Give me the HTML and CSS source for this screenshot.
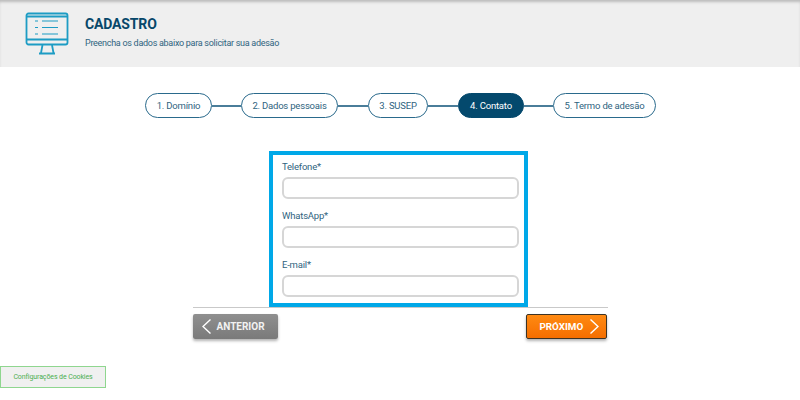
FILE: index.html
```html
<!DOCTYPE html>
<html lang="pt-BR">
<head>
<meta charset="utf-8">
<title>Cadastro</title>
<link rel="stylesheet" href="styles.css">
</head>
<body>
<header class="hero">
  <svg class="hero-icon" width="46" height="44" viewBox="0 0 46 44" fill="none" stroke="#1d9cc4" stroke-width="1.8">
    <rect x="1.5" y="1.5" width="41" height="31" rx="2"/>
    <path d="M1.5 4.5H42.5M1.5 27.5H42.5"/>
    <path d="M17.5 33L16 41M27 33L28.5 41M14 41.5H30"/>
    <path d="M10 9H13M17 9H33M10 15.5H13M17 15.5H33M10 22H13M17 22H33" stroke-width="1.2"/>
  </svg>
  <div class="hero-text">
    <h1 class="hero-title">CADASTRO</h1>
    <p class="hero-sub">Preencha os dados abaixo para solicitar sua adesão</p>
  </div>
</header>
<nav class="steps">
  <span class="step s1">1. Domínio</span><span class="link l1"></span>
  <span class="step s2">2. Dados pessoais</span><span class="link l2"></span>
  <span class="step s3">3. SUSEP</span><span class="link l3"></span>
  <span class="step s4 active">4. Contato</span><span class="link l4"></span>
  <span class="step s5">5. Termo de adesão</span>
</nav>
<main class="main">
  <form class="form-box">
    <label class="field"><span class="field-label">Telefone*</span><input class="field-input" type="text"></label>
    <label class="field"><span class="field-label">WhatsApp*</span><input class="field-input" type="text"></label>
    <label class="field"><span class="field-label">E-mail*</span><input class="field-input" type="text"></label>
  </form>
  <div class="actions">
    <button class="btn btn-prev" type="button">
      <svg width="9" height="15" viewBox="0 0 9 15" fill="none" stroke="#fff" stroke-width="1.4"><path d="M8.5 0.5L1 7.5L8.5 14.5"/></svg>
      ANTERIOR
    </button>
    <button class="btn btn-next" type="button">
      PRÓXIMO
      <svg width="9" height="15" viewBox="0 0 9 15" fill="none" stroke="#fff" stroke-width="1.4"><path d="M0.5 0.5L8 7.5L0.5 14.5"/></svg>
    </button>
  </div>
</main>
<button class="cookies" type="button">Configurações de Cookies</button>
</body>
</html>
```
FILE: styles.css
```css
* { box-sizing: border-box; }
html, body { margin: 0; padding: 0; }
body {
  width: 800px;
  height: 400px;
  overflow: hidden;
  background: #fff;
  font-family: Roboto, sans-serif;
  position: relative;
}
.hero {
  height: 67px;
  background: #efefef;
  display: flex;
  align-items: flex-start;
  padding: 12px 0 0 25px;
  box-shadow: inset 0 3px 3px -1px rgba(0,0,0,.22);
}
.hero-icon { flex: none; }
.hero-text { margin-left: 14px; padding-top: 3px; }
.hero-title {
  margin: 0;
  font-size: 14px;
  line-height: 18px;
  font-weight: 700;
  letter-spacing: -0.15px;
  color: #07476a;
}
.hero-sub {
  margin: 4px 0 0;
  font-size: 9px;
  line-height: 12px;
  letter-spacing: -0.28px;
  color: #2f6480;
}
.steps {
  display: flex;
  align-items: center;
  margin: 26px 0 0 145px;
  height: 25px;
}
.step {
  height: 25px;
  border: 1.5px solid #2a6a8c;
  border-radius: 13px;
  display: flex;
  align-items: center;
  justify-content: center;
  font-size: 9.5px;
  letter-spacing: -0.2px;
  color: #2f6480;
  background: #fff;
  flex: none;
}
.s1 { width: 67px; }
.s2 { width: 97px; }
.s3 { width: 60px; }
.s4 { width: 66px; }
.s5 { width: 103px; }
.step.active { background: #04496d; border-color: #04496d; color: #fff; }
.link { height: 2px; background: #4a7d99; flex: none; }
.l1 { width: 29px; }
.l2 { width: 30px; }
.l3 { width: 30px; }
.l4 { width: 29px; }
.main {
  display: flex;
  flex-direction: column;
  align-items: center;
  margin-top: 33px;
}
.form-box {
  width: 259px;
  height: 156px;
  margin-right: 3px;
  border: 4px solid #00a8e8;
  padding: 5px 9px 0;
  display: flex;
  flex-direction: column;
  gap: 7px;
}
.field { display: block; height: 42px; }
.field-label {
  display: block;
  font-size: 9.5px;
  letter-spacing: -0.2px;
  line-height: 14px;
  height: 17px;
  color: #2f6480;
}
.field-input {
  display: block;
  width: 237px;
  height: 22px;
  border: 2px solid #d6d6d6;
  border-radius: 6px;
  background: #fff;
  padding: 0;
  outline: none;
}
.actions {
  width: 415px;
  border-top: 1px solid #c9c9c9;
  padding-top: 6px;
  padding-right: 1px;
  display: flex;
  justify-content: space-between;
}
.btn {
  height: 25px;
  border-radius: 2px;
  font-family: Roboto, sans-serif;
  font-size: 10px;
  font-weight: 700;
  color: #fff;
  display: flex;
  align-items: center;
  padding: 0;
  box-shadow: 0 2px 3px rgba(0,0,0,.3);
}
.btn-prev {
  width: 85px;
  background: linear-gradient(#8f8f8f, #7a7a7a);
  border: 0;
  gap: 6px;
  padding-left: 9px;
  color: #f2f2f2;
}
.btn-next {
  width: 81px;
  background: linear-gradient(#ff8a12, #f56e00);
  border: 1px solid #3d3324;
  gap: 7px;
  padding-left: 13px;
  font-size: 9.8px;
}
.cookies {
  position: absolute;
  left: 0;
  top: 366px;
  width: 106px;
  height: 22px;
  background: #f0f0f0;
  border: 1.5px solid #8fd68f;
  font-family: Roboto, sans-serif;
  font-size: 7px;
  letter-spacing: -0.1px;
  color: #4caf50;
  padding: 0;
}
```
